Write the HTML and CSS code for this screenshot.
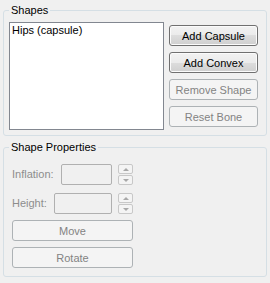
FILE: index.html
```html
<!DOCTYPE html>
<html>
<head>
    <meta charset="UTF-8">
    <title>Shapes</title>
    <link rel="stylesheet" href="styles.css">
</head>
<body>
    <fieldset class="group group-shapes">
        <legend>Shapes</legend>
        <div class="shapes-body">
            <div class="listbox">
                <div class="list-item">Hips (capsule)</div>
            </div>
            <div class="btn-col">
                <button class="btn">Add Capsule</button>
                <button class="btn">Add Convex</button>
                <button class="btn" disabled>Remove Shape</button>
                <button class="btn" disabled>Reset Bone</button>
            </div>
        </div>
    </fieldset>

    <fieldset class="group group-props">
        <legend>Shape Properties</legend>
        <div class="prop-row">
            <span class="prop-label">Inflation:</span>
            <input type="text" class="prop-input" disabled>
            <div class="spinner">
                <span class="spin spin-up"></span>
                <span class="spin spin-down"></span>
            </div>
        </div>
        <div class="prop-row">
            <span class="prop-label">Height:</span>
            <input type="text" class="prop-input" disabled>
            <div class="spinner">
                <span class="spin spin-up"></span>
                <span class="spin spin-down"></span>
            </div>
        </div>
        <button class="btn wide" disabled>Move</button>
        <button class="btn wide" disabled>Rotate</button>
    </fieldset>
</body>
</html>
```

FILE: styles.css
```css
body {
    margin: 0;
    width: 270px;
    height: 283px;
    background-color: #f0f0f0;
    font-family: "Liberation Sans", Arial, sans-serif;
    font-size: 11px;
    line-height: 13px;
    color: #000;
    overflow: hidden;
}

.group {
    margin: 4px 3px 0 3px;
    border: 1px solid #d5dfe5;
    border-radius: 3px;
    min-width: 0;
}

.group legend {
    padding: 0 2px;
    line-height: 13px;
}

.group-shapes {
    padding: 5px 8px 5px 5px;
}

.group-props {
    margin-top: 5px;
    padding: 10px 8px 8px 8px;
}

.group-props legend {
    margin-left: -3px;
}

.shapes-body {
    display: flex;
    gap: 5px;
}

.listbox {
    width: 155px;
    height: 108px;
    box-sizing: border-box;
    border: 1px solid #828790;
    background-color: #fff;
    padding: 1px 2px;
}

.btn-col {
    display: flex;
    flex-direction: column;
    gap: 6px;
    padding-top: 3px;
}

.btn {
    width: 89px;
    height: 21px;
    box-sizing: border-box;
    padding: 0;
    border: 1px solid #707070;
    border-radius: 3px;
    background: linear-gradient(#f2f2f2 0%, #ebebeb 50%, #dddddd 50%, #cfcfcf 100%);
    box-shadow: inset 0 0 0 1px #fbfbfb;
    font-family: inherit;
    font-size: 11px;
    color: #000;
}

.btn:disabled {
    border-color: #adb2b5;
    background: #f4f4f4;
    box-shadow: none;
    color: #838383;
}

.btn.wide {
    display: block;
    width: 121px;
    margin-top: 6px;
}

.prop-row {
    display: flex;
    align-items: center;
    width: 121px;
    height: 21px;
    margin-bottom: 8px;
}

.prop-row + .prop-row {
    margin-bottom: 1px;
}

.prop-label {
    color: #8d8d8d;
    margin-right: 7px;
}

.prop-input {
    flex: 1;
    min-width: 0;
    height: 21px;
    box-sizing: border-box;
    margin: 0;
    border: 1px solid #b0b0b0;
    border-radius: 2px;
    background-color: #f0f0f0;
}

.spinner {
    display: flex;
    flex-direction: column;
    width: 15px;
    height: 21px;
    margin-left: 6px;
    gap: 1px;
}

.spin {
    flex: 1;
    box-sizing: border-box;
    border: 1px solid #c8c8c8;
    border-radius: 2px;
    background-color: #f4f4f4;
    display: flex;
    align-items: center;
    justify-content: center;
}

.spin::after {
    content: "";
    border-left: 3px solid transparent;
    border-right: 3px solid transparent;
}

.spin-up::after {
    border-bottom: 3px solid #a8a8a8;
}

.spin-down::after {
    border-top: 3px solid #a8a8a8;
}
```
